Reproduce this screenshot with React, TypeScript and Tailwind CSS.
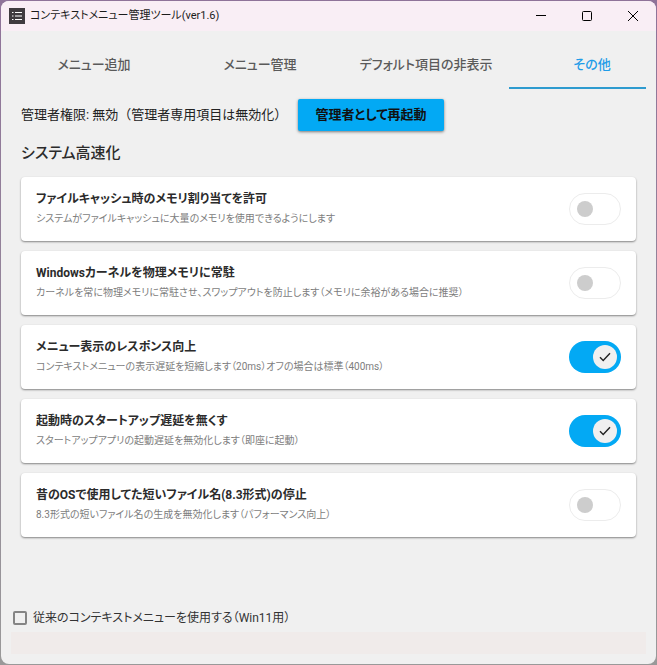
import React, { useState } from 'react';

const tabs = ['メニュー追加', 'メニュー管理', 'デフォルト項目の非表示', 'その他'];

const initialSettings = [
  {
    id: 'file-cache',
    title: 'ファイルキャッシュ時のメモリ割り当てを許可',
    description: 'システムがファイルキャッシュに大量のメモリを使用できるようにします',
    enabled: false,
  },
  {
    id: 'kernel-memory',
    title: 'Windowsカーネルを物理メモリに常駐',
    description: 'カーネルを常に物理メモリに常駐させ、スワップアウトを防止します（メモリに余裕がある場合に推奨）',
    enabled: false,
  },
  {
    id: 'menu-response',
    title: 'メニュー表示のレスポンス向上',
    description: 'コンテキストメニューの表示遅延を短縮します（20ms）オフの場合は標準（400ms）',
    enabled: true,
  },
  {
    id: 'startup-delay',
    title: '起動時のスタートアップ遅延を無くす',
    description: 'スタートアップアプリの起動遅延を無効化します（即座に起動）',
    enabled: true,
  },
  {
    id: 'short-names',
    title: '昔のOSで使用してた短いファイル名(8.3形式)の停止',
    description: '8.3形式の短いファイル名の生成を無効化します（パフォーマンス向上）',
    enabled: false,
  },
];

const AppIcon = () => (
  <svg className="w-4 h-4" viewBox="0 0 16 16" aria-hidden="true">
    <rect width="16" height="16" fill="#3f3b3f" />
    <path d="M3 4.5h1.5M3 8h1.5M3 11.5h1.5M6 4.5h7M6 8h7M6 11.5h7" stroke="#fff" strokeWidth="1.2" />
  </svg>
);

const TitleBar = () => (
  <header className="h-[30px] shrink-0 flex items-center bg-[#f9eef5] pl-2">
    <AppIcon />
    <h1 className="ml-[5px] flex-1 text-[11px] text-[#1b1b1b] whitespace-nowrap">コンテキストメニュー管理ツール(ver1.6)</h1>
    <button aria-label="最小化" className="w-[46px] h-full flex items-center justify-center">
      <svg className="w-[10px] h-[10px]" viewBox="0 0 10 10">
        <path d="M0 4.5h10" stroke="#000" />
      </svg>
    </button>
    <button aria-label="最大化" className="w-[46px] h-full flex items-center justify-center">
      <svg className="w-[10px] h-[10px]" viewBox="0 0 10 10">
        <rect x="0.5" y="0.5" width="9" height="9" rx="1" fill="none" stroke="#000" />
      </svg>
    </button>
    <button aria-label="閉じる" className="w-[46px] h-full flex items-center justify-center">
      <svg className="w-[10px] h-[10px]" viewBox="0 0 10 10">
        <path d="M0 0l10 10M10 0L0 10" stroke="#000" />
      </svg>
    </button>
  </header>
);

interface ToggleProps {
  id: string;
  checked: boolean;
  onChange: () => void;
}

const Toggle = ({ id, checked, onChange }: ToggleProps) => (
  <span
    className={`relative w-[52px] h-8 shrink-0 rounded-full flex items-center ${
      checked ? 'bg-[#03a9f4] justify-end px-1' : 'bg-white border border-[#ececec] px-[7px]'
    }`}
  >
    <input
      id={id}
      type="checkbox"
      role="switch"
      checked={checked}
      onChange={onChange}
      className="absolute inset-0 w-full h-full appearance-none cursor-pointer"
    />
    {checked ? (
      <span className="w-6 h-6 rounded-full bg-[#f0f0f0] flex items-center justify-center">
        <svg className="w-3 h-3" viewBox="0 0 12 12" fill="none">
          <path d="M1 6.3l3.2 3.2L11 2.3" stroke="#222" strokeWidth="1.4" />
        </svg>
      </span>
    ) : (
      <span className="w-4 h-4 rounded-full bg-[#cdcdcd]" />
    )}
  </span>
);

export default function App() {
  const [activeTab, setActiveTab] = useState('その他');
  const [settings, setSettings] = useState(initialSettings);
  const [classicMenu, setClassicMenu] = useState(false);

  const toggleSetting = (id: string) => {
    setSettings(settings.map((s) => (s.id === id ? { ...s, enabled: !s.enabled } : s)));
  };

  return (
    <div className="min-h-screen flex flex-col p-px bg-linear-to-b from-[#8f7399] to-[#999999] font-[Roboto,'Noto_Sans_CJK_JP',sans-serif] [font-feature-settings:'palt']">
      <div className="flex-1 flex flex-col rounded-lg overflow-hidden bg-[#f0f0f0]">
        <TitleBar />

        <nav className="mx-[10px] flex overflow-hidden">
          {tabs.map((tab) => (
            <button
              key={tab}
              onClick={() => setActiveTab(tab)}
              className={`w-[166px] h-[58px] shrink-0 pt-3 border-b-2 text-[13px] font-medium whitespace-nowrap ${
                activeTab === tab ? 'border-[#2e9bcf] text-[#1f9ce8]' : 'border-transparent text-[#5a5a5a]'
              }`}
            >
              {tab}
            </button>
          ))}
        </nav>

        <main className="px-5 pt-[10px]">
          <div className="flex items-center gap-[11px]">
            <p className="text-[13px] text-[#222222] whitespace-nowrap [font-feature-settings:normal]">
              管理者権限: 無効（管理者専用項目は無効化）
            </p>
            <button className="h-8 px-[17px] rounded-xs bg-[#03a9f4] text-[13px] font-bold text-[#111111] whitespace-nowrap shadow-[0_1px_3px_rgba(0,0,0,0.5)]">
              管理者として再起動
            </button>
          </div>

          <h2 className="mt-[10px] text-[15px] leading-6 font-medium text-[#2b2b2b]">システム高速化</h2>

          <ul className="mt-3 flex flex-col gap-[10px]">
            {settings.map((s) => (
              <li
                key={s.id}
                className="h-16 flex items-center justify-between rounded bg-white px-[15px] shadow-[0_1px_2px_rgba(0,0,0,0.45)]"
              >
                <label htmlFor={s.id} className="whitespace-nowrap">
                  <span className="block text-[12px] leading-5 font-bold text-[#2b2b2b]">{s.title}</span>
                  <span className="block text-[10px] leading-5 text-[#7d7d7d]">{s.description}</span>
                </label>
                <Toggle id={s.id} checked={s.enabled} onChange={() => toggleSetting(s.id)} />
              </li>
            ))}
          </ul>
        </main>

        <footer className="mt-auto px-[10px] pb-[10px]">
          <label className="flex items-center gap-[6px] pl-0.5 pb-1 text-[12px] leading-5 text-[#333333]">
            <input
              type="checkbox"
              checked={classicMenu}
              onChange={() => setClassicMenu(!classicMenu)}
              className="appearance-none w-[14px] h-[14px] rounded-xs border-2 border-[#858585] checked:bg-[#03a9f4]"
            />
            従来のコンテキストメニューを使用する（Win11用）
          </label>
          <div className="h-[22px] bg-[#f0ebea]" />
        </footer>
      </div>
    </div>
  );
}
